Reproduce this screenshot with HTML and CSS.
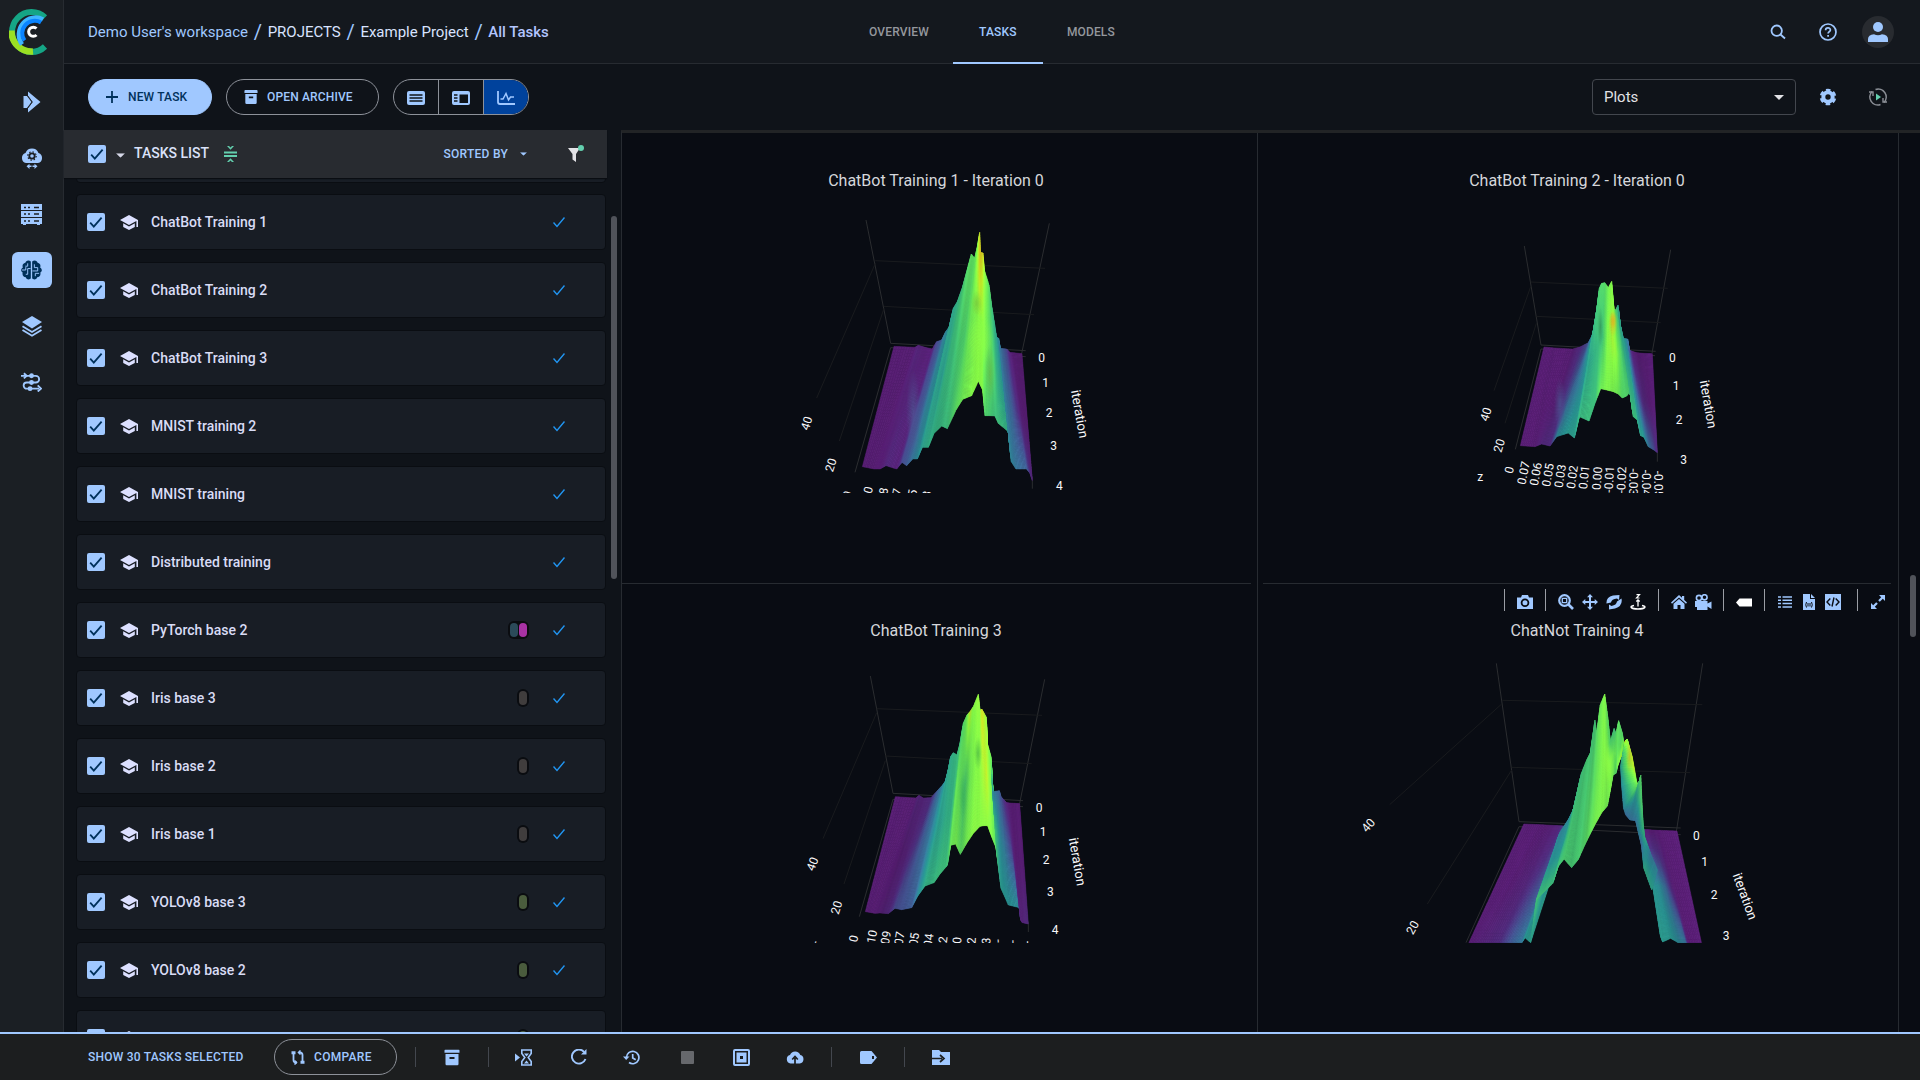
FILE: index.html
```html
<!DOCTYPE html>
<html lang="en">
<head>
<meta charset="utf-8">
<title>Example Project - All Tasks</title>
<link rel="stylesheet" href="styles.css">
</head>
<body>
<svg class="sprite" width="0" height="0">
  <symbol id="check" viewBox="0 0 18 18"><path d="M3.2 9.6l3.6 4L14.6 4.6" fill="none" stroke="currentColor" stroke-width="1.8"/></symbol>
  <symbol id="cap" viewBox="0 0 18 16"><path d="M9 0L0 5l9 5 7.4-4.1V12H18V5zM3.2 8.3v3.6L9 15l5.800-3.100V8.300L9 11.500z" fill="currentColor"/></symbol>
  <symbol id="done" viewBox="0 0 12 12"><path d="M.5 6.500L4 10.500 11.500 1.500" fill="none" stroke="currentColor" stroke-width="1.400"/></symbol>
  <symbol id="caret" viewBox="0 0 10 5"><path d="M0 0h10L5 5z" fill="currentColor"/></symbol>
  <symbol id="archive" viewBox="0 0 16 16"><path fill-rule="evenodd" d="M1.500 0h13q1 0 1 1v2.300H.5V1q0-1 1-1zM1.500 4.500h13V14.500q0 1.500-1.500 1.500H3q-1.500 0-1.500-1.500zM5.500 7.500v2h5v-2z" fill="currentColor"/></symbol>
</svg>
<div class="app">
  <nav class="sidebar">
    <svg class="logo" width="40" height="48" viewBox="0 0 40 48" fill="none">
      <path d="M36 9.500A19.500 20 0 1 0 36 38.500" stroke="#15a585" stroke-width="6"/>
      <path d="M2.500 22.500A20 20.500 0 0 0 24 43.500" stroke="#9be022" stroke-width="6.500"/>
      <path d="M34 11.500A16.500 17 0 0 0 13 36.500" stroke="#3fb5ff" stroke-width="4.500"/>
      <path d="M32 14.500A12.500 12.500 0 0 0 15.500 32.500" stroke="#0a84ff" stroke-width="4"/>
      <path d="M27.500 20.500A4.600 4.600 0 1 0 27.500 27" stroke="#fff" stroke-width="3"/>
    </svg>
    <a class="nav"><svg width="18" height="22" viewBox="0 0 18 22"><path d="M5 .5L17.500 11 5 21.500V17L9.500 11 5 5z" fill="#a0c8ff"/><path d="M.5 5H4L8.500 11 4 17H.5z" fill="#a0c8ff"/><path d="M4.500 4.500L9.300 11l-4.800 6.500" fill="none" stroke="#1b1f24" stroke-width=".9"/></svg></a>
    <a class="nav"><svg width="22" height="22" viewBox="0 0 22 22"><path d="M5 16a5.200 5.200 0 0 1-.5-10A7 7 0 0 1 17.500 6 5.200 5.200 0 0 1 17 16z" fill="#a0c8ff"/><circle cx="11" cy="9" r="2.700" fill="none" stroke="#1b1f24" stroke-width="1.800"/><circle cx="11" cy="9" r="4.200" fill="none" stroke="#1b1f24" stroke-width="1.200" stroke-dasharray="1.400 1.899"/><path d="M5.500 19.300l3-2.600v1.800h5v-1.800l3 2.600-3 2.600v-1.800h-5v1.800z" fill="#a0c8ff"/><path d="M11 17v5" stroke="#1b1f24"/></svg></a>
    <a class="nav"><svg width="21" height="21" viewBox="0 0 21 21"><path d="M0 0h21v6H0zM0 7h21v6H0zM0 14h21v6h-2v1h-3v-1H5v1H2v-1H0z" fill="#a0c8ff"/><path d="M3 3.500h2M7 3.500h2M13 3.500h5M3 10h2M7 10h2M13 10h5M3 17h2M7 17h2M13 17h5" stroke="#1b1f24" stroke-width="1.500"/></svg></a>
    <a class="nav nav-on"><svg width="21" height="20" viewBox="0 0 22 21"><path d="M10.300 1.500C8-.6 4.800.7 4.600 3 1.800 3.500 1 6 2 8-.5 9.500-.3 12 1.700 13c-.7 3 1 5 3.300 5 .7 2.500 3.700 3 5.300 1.500zM11.700 1.500C14-.6 17.200.7 17.400 3c2.800.5 3.600 3 2.600 5 2.500 1.500 2.300 4 .3 5 .7 3-1 5-3.300 5-.7 2.500-3.700 3-5.300 1.500z" fill="#00315b"/><path d="M1 10.500h4v-3M7 3.500v3H4.500M10 9H7v6H5M14 4.500v3.500h3.500M12 11.500h5.500V8M15 17v-3h4" fill="none" stroke="#a0c8ff"/></svg></a>
    <a class="nav"><svg width="20" height="21" viewBox="0 0 20 21"><path d="M10 0l10 6-10 6.500L0 6z" fill="#a0c8ff"/><path d="M.5 10.300l9.500 5.700 9.500-5.700M.5 14l9.500 5.700 9.500-5.700" fill="none" stroke="#a0c8ff" stroke-width="1.900"/></svg></a>
    <a class="nav"><svg width="21" height="20" viewBox="0 0 22 20" fill="none" stroke="#a0c8ff" stroke-width="1.900"><path d="M0 3.500h15.500a3.400 3.400 0 0 1 0 7H6a3.200 3.200 0 0 0 0 6.500h13"/><path d="M3 .8l3 2.700-3 2.700M17.500 13.500L21 17l-3.500 3" /><circle cx="11" cy="3.500" r="1.600" fill="#a0c8ff"/><circle cx="11" cy="10.500" r="1.600" fill="#a0c8ff"/><circle cx="9.500" cy="17" r="1.600" fill="#a0c8ff"/></svg></a>
  </nav>
  <div class="main">
    <header class="header">
      <div class="crumbs"><span>Demo User's workspace</span><i>/</i><span class="crumb-w">PROJECTS</span><i>/</i><span class="crumb-w">Example Project</span><i>/</i><b>All Tasks</b></div>
      <div class="tabs"><a class="tab">OVERVIEW</a><a class="tab tab-on">TASKS</a><a class="tab">MODELS</a></div>
      <div class="user">
        <svg width="16" height="16" viewBox="0 0 16 16" fill="none" stroke="#a0c8ff" stroke-width="1.800"><circle cx="6.700" cy="6.700" r="5.200"/><path d="M10.500 10.500L15 14.500"/></svg>
        <svg width="18" height="18" viewBox="0 0 18 18" fill="none" stroke="#a0c8ff" stroke-width="1.700"><circle cx="9" cy="9" r="8"/><path d="M6.600 7.200c0-3 4.800-3 4.800-.2 0 1.600-2.300 1.800-2.300 3.600M9.100 12v1.800"/></svg>
        <span class="avatar"><svg width="20" height="22" viewBox="0 0 20 22" fill="#a0c8ff"><circle cx="10" cy="6" r="5"/><path d="M0 21v-3q0-4 6-4.800 4 2 8 0 6 .8 6 4.800v3z"/></svg></span>
      </div>
    </header>
    <div class="toolbar">
      <button class="btn btn-new"><svg width="12" height="12" viewBox="0 0 12 12"><path d="M6 0v12M0 6h12" stroke="#00315b" stroke-width="1.800"/></svg>NEW TASK</button>
      <button class="btn btn-archive"><svg width="14" height="14"><use href="#archive"/></svg>OPEN ARCHIVE</button>
      <div class="views">
        <span><svg width="18" height="14" viewBox="0 0 18 14"><rect width="18" height="14" rx="2" fill="#a0c8ff"/><path d="M2.500 4h13M2.500 7h13M2.500 10h13" stroke="#0f1319" stroke-width="1.300"/></svg></span>
        <span><svg width="18" height="14" viewBox="0 0 18 14"><rect width="18" height="14" rx="2" fill="#a0c8ff"/><path d="M7.500 3.500H16V12H7.500z" fill="#0f1319"/><path d="M2 4h3.500M2 7h3.500M2 10h3.500" stroke="#0f1319" stroke-width="1.400"/></svg></span>
        <span class="view-on"><svg width="18" height="14" viewBox="0 0 18 14" fill="none" stroke="#a0c8ff" stroke-width="1.800"><path d="M1 0v11q0 2 2 2h15"/><path d="M3.500 8H6L9 2.500 11.500 9 13.500 6H17" stroke-width="1.500"/></svg></span>
      </div>
      <div class="select">Plots<svg width="10" height="5"><use href="#caret"/></svg></div>
      <svg class="gear" width="18" height="18" viewBox="0 0 18 18"><circle cx="9" cy="9" r="4.700" fill="none" stroke="#a0c8ff" stroke-width="4"/><circle cx="9" cy="9" r="7" fill="none" stroke="#a0c8ff" stroke-width="2.600" stroke-dasharray="4.330 3" stroke-dashoffset="-1.500"/></svg>
      <svg class="auto" width="18" height="18" viewBox="0 0 18 18" fill="none" stroke="#8a8e95" stroke-width="1.600"><path d="M6.500 1.500A8 8 0 0 1 15 14.500M11.500 16.500A8 8 0 0 1 3 3.500"/><path d="M0 4h4v4M18 14h-4v-4" stroke-width="1.400"/><path d="M7 5.500L12 9l-5 3.500z" fill="#63cfae" stroke="none"/></svg>
    </div>
    <div class="split">
      <section class="tasks">
        <div class="tasks-head">
          <span class="box"><svg width="18" height="18"><use href="#check"/></svg></span>
          <svg class="head-caret" width="9" height="5" viewBox="0 0 10 5"><use href="#caret"/></svg>
          <h2>TASKS LIST</h2>
          <svg class="fold" width="13" height="16" viewBox="0 0 13 16" fill="#63cfae"><path d="M0 5.500h13v2H0zM0 9h13v2H0zM3 0h2l1.500 1.500L8 0h2L6.500 3.800zM3 16h2l1.500-1.500L8 16h2l-3.500-3.800z"/></svg>
          <span class="sorted">SORTED BY<svg width="7" height="4" viewBox="0 0 10 5"><use href="#caret"/></svg></span>
          <svg class="filter" width="16" height="18" viewBox="0 0 16 18"><path d="M0 3h12l-4 6v8l-3.500-2.500V9z" fill="#e2e2e6"/><circle cx="13" cy="3" r="3" fill="#63cfae"/></svg>
        </div>
        <div class="list-wrap">
          <div class="list" id="list"></div>
          <div class="thumb"></div>
        </div>
      </section>
      <section class="plots">
        <article class="cell">
          <h3>ChatBot Training 1 - Iteration 0</h3>
          <div class="scene">
            <svg viewBox="-474 99 1887 900">
              <path class="axis" d="M258 180L332 550M808 190L724 585M332 550L737 572M332 563L737 590M332 563L225 937M757 950V986"/>
              <path class="grid" d="M286 302L795 325M312 439L762 464M286 310L110 714M312 445L178 843"/>
              <text transform="translate(80 790) rotate(-72)">40</text><text transform="translate(153 915) rotate(-72)">20</text>
              <text x="785" y="593">0</text><text x="797" y="670">1</text><text x="807" y="758">2</text><text x="821" y="859">3</text><text x="838" y="978">4</text>
              <text class="name" transform="translate(899 762) rotate(80)">iteration</text>
              <text transform="translate(203 1004) rotate(-74)">0</text><text transform="translate(265 990) rotate(-76)">0</text><text transform="translate(311 993) rotate(-78)">8</text><text transform="translate(352 996) rotate(-79)">7</text><text transform="translate(398 999) rotate(-80)">5</text><text transform="translate(441 1003) rotate(-82)">3</text><text transform="translate(481 1008) rotate(-83)">1</text>
            </svg>
            <canvas width="629" height="300" data-surface="first"></canvas>
          </div>
        </article>
        <article class="cell">
          <h3>ChatBot Training 2 - Iteration 0</h3>
          <div class="scene">
            <svg viewBox="-531 -81 1884 900">
              <path class="axis" d="M253 78L303 375M692 89L636 400M303 375L647 394M303 387L645 407M303 387L226 688M652 696V725"/>
              <path class="grid" d="M272 186L683 205M289 289L662 308M272 200L162 512M289 310L195 610"/>
              <text transform="translate(138 583) rotate(-72)">40</text><text transform="translate(178 677) rotate(-74)">20</text>
              <text x="697" y="413">0</text><text x="708" y="499">1</text><text x="717" y="601">2</text><text x="731" y="720">3</text>
              <text class="name" transform="translate(805 553) rotate(80)">iteration</text>
              <text x="121" y="771">z</text><text transform="translate(208 750) rotate(-76)">0</text>
              <text transform="translate(251 759) rotate(-78)">0.07</text><text transform="translate(288 762) rotate(-79)">0.06</text><text transform="translate(324 765) rotate(-80)">0.05</text><text transform="translate(361 768) rotate(-81)">0.03</text><text transform="translate(397 771) rotate(-82)">0.02</text><text transform="translate(433 772) rotate(-84)">0.01</text><text transform="translate(472 775) rotate(-86)">0.00</text><text transform="translate(508 778) rotate(-87)">-0.01</text><text transform="translate(545 780) rotate(-88)">-0.02</text><text transform="translate(580 786) rotate(91)">-0.03</text><text transform="translate(617 789) rotate(90)">-0.04</text><text transform="translate(655 792) rotate(89)">-0.05</text>
            </svg>
            <canvas width="628" height="300" data-surface="second"></canvas>
          </div>
        </article>
        <article class="cell">
          <h3>ChatBot Training 3</h3>
          <div class="scene">
            <svg viewBox="-474 99 1887 900">
              <path class="axis" d="M271 198L339 550M794 208L718 585M339 550L729 572M339 568L729 590M339 568L238 920M745 935V966"/>
              <path class="grid" d="M290 296L786 316M316 438L755 461M290 308L129 686M316 452L192 822"/>
              <text transform="translate(98 762) rotate(-68)">40</text><text transform="translate(170 893) rotate(-73)">20</text>
              <text x="777" y="593">0</text><text x="789" y="665">1</text><text x="798" y="750">2</text><text x="811" y="847">3</text><text x="825" y="959">4</text>
              <text class="name" transform="translate(892 755) rotate(80)">iteration</text>
              <text transform="translate(105 998) rotate(-74)">-</text><text transform="translate(221 986) rotate(-78)">0</text>
              <text transform="translate(276 980) rotate(-79)">10</text><text transform="translate(318 983) rotate(-80)">09</text><text transform="translate(359 985) rotate(-81)">07</text><text transform="translate(403 988) rotate(-82)">05</text><text transform="translate(446 991) rotate(-83)">04</text><text transform="translate(489 989) rotate(-84)">2</text><text transform="translate(532 991) rotate(-86)">0</text><text transform="translate(575 992) rotate(-87)">2</text><text transform="translate(619 993) rotate(-88)">3</text><text transform="translate(656 993) rotate(88)">-</text><text transform="translate(700 995) rotate(89)">-</text><text transform="translate(743 998) rotate(90)">-</text>
            </svg>
            <canvas width="629" height="300" data-surface="third"></canvas>
          </div>
        </article>
        <article class="cell">
          <div class="modebar">
            <span><svg width="16" height="14" viewBox="0 0 16 14"><path d="M5 0h6l1 2.500h4V14H0V2.500h4z" fill="#a0c8ff"/><circle cx="8" cy="7.800" r="3.400" fill="none" stroke="#090c13" stroke-width="1.800"/></svg></span>
            <span>
              <svg width="16" height="16" viewBox="0 0 16 16" fill="none" stroke="#a0c8ff"><circle cx="6.500" cy="6.500" r="5.300" stroke-width="2.200"/><path d="M10.500 10.500l4.500 4.500" stroke-width="2.600"/><path d="M4.300 4.300h4.400v4.400H4.300z" stroke-width="1.300"/></svg>
              <svg width="16" height="16" viewBox="0 0 16 16"><path d="M8 0l3 3.300H9V7h3.700V5L16 8l-3.300 3V9H9v3.700h2L8 16l-3-3.300h2V9H3.300v2L0 8l3.300-3v2H7V3.300H5z" fill="#a0c8ff"/></svg>
              <svg width="16" height="16" viewBox="0 0 16 16" fill="#a0c8ff"><path d="M.5 9.500Q0 3 7 1.500L13.500 1 13 6 11 4.500Q5.500 5 5 8.500zM15.500 4.500Q17 12 9 14.500L3 15.500 3 10.500 5.500 12Q10.500 11 11 7.500z"/></svg>
              <svg width="16" height="16" viewBox="0 0 16 16" fill="none" stroke="#fff"><path d="M6.500.7h3L6.500 4h3" stroke-width="1.200"/><path d="M8 6v6.500M6.300 7.500L8 5.800l1.700 1.700" stroke-width="1.300"/><path d="M4 11.500C-1 12.500 1 15 8 15s9-2.500 4-3.500" stroke-width="1.700"/></svg>
            </span>
            <span>
              <svg width="16" height="14" viewBox="0 0 16 14" fill="#a0c8ff"><path d="M8 0l3 2.800V1h2.200v4L16 7.500 15 8.800 8 2.500 1 8.800 0 7.500zM2.500 8.700L8 4l5.500 4.700V14h-4v-4h-3v4h-4z"/></svg>
              <svg width="17" height="16" viewBox="0 0 17 16" fill="#a0c8ff"><path d="M0 7h12.500v2.500l4-2v7.500l-4-2.500V16H2v-3H0z"/><circle cx="4" cy="4" r="2.600" fill="none" stroke="#a0c8ff" stroke-width="1.600"/><circle cx="9.500" cy="3.300" r="2.600" fill="none" stroke="#a0c8ff" stroke-width="1.600"/></svg>
            </span>
            <span><svg width="16" height="9" viewBox="0 0 16 9"><path d="M3.500.5H16v8H3.500L0 4.500z" fill="#fff"/></svg></span>
            <span class="wide">
              <svg width="14" height="12" viewBox="0 0 14 12"><path d="M0 1h3M4.500 1H14M0 4.300h3M4.500 4.300H14M0 7.600h3M4.500 7.600H14M0 11h3M4.500 11H14" stroke="#a0c8ff" stroke-width="1.500"/></svg>
              <svg width="12" height="16" viewBox="0 0 12 16"><path d="M0 0h7v5h5v11H0zM8 0l4 4H8z" fill="#a0c8ff"/><path d="M3.500 8Q2 10.800 3.500 13.500M8.500 8q1.500 2.800 0 5.500M5 9v3.500M7 9v3.500" fill="none" stroke="#090c13"/></svg>
              <svg width="16" height="16" viewBox="0 0 16 16"><path d="M0 0h16v16H0z" fill="#a0c8ff"/><path d="M5.300 4.500L2 8l3.300 3.500M10.700 4.500L14 8l-3.300 3.500M9 3.500l-2 9" fill="none" stroke="#090c13" stroke-width="1.400"/></svg>
            </span>
            <span><svg width="14" height="14" viewBox="0 0 14 14"><path d="M8 0h6v6l-2.200-2.200L8.800 6.800 7.200 5.200l3-3zM0 8l2.200 2.200L5.200 7.200l1.600 1.600-3 3L6 14H0z" fill="#a0c8ff"/></svg></span>
          </div>
          <h3>ChatNot Training 4</h3>
          <div class="scene">
            <svg viewBox="-201 219 1884 900">
              <path class="axis" d="M499 280L567 755M1118 280L1039 785M567 755L1052 774M567 770L1052 794M567 770L408 1118"/>
              <path class="grid" d="M517 391L1117 404M545 592L1081 608M515 402L179 704M545 600L292 1002"/>
              <text transform="translate(115 766) rotate(-50)">40</text><text transform="translate(248 1073) rotate(-62)">20</text>
              <text x="1099" y="799">0</text><text x="1124" y="877">1</text><text x="1152" y="975">2</text><text x="1188" y="1098">3</text>
              <text class="name" transform="translate(1245 979) rotate(70)">iteration</text>
            </svg>
            <canvas width="628" height="300" data-surface="fourth"></canvas>
          </div>
        </article>
        <div class="page-thumb"></div>
      </section>
    </div>
  </div>
  <footer class="footer">
    <span class="selected">SHOW 30 TASKS SELECTED</span>
    <button class="btn btn-compare"><svg width="14" height="15" viewBox="0 0 14 15" fill="none" stroke="#a0c8ff" stroke-width="1.800"><path d="M2.500 2v8q0 2.500 2.500 2.500h1M11.500 13V5Q11.500 2.500 9 2.500H8"/><path d="M3.500 10.500L5.500 12.500l-2 2M9.500.5l-2 2 2 2" stroke-width="1.500"/><path d="M.5 1.200h4v3h-4zM9.500 10.800h4v3h-4z" fill="#a0c8ff" stroke="none"/></svg>COMPARE</button>
    <div class="acts">
      <span><svg width="16" height="17" viewBox="0 0 16 16"><use href="#archive"/></svg></span>
      <span>
        <svg class="enqueue" width="17" height="17" viewBox="0 0 17 17"><path d="M0 4.500L5 8.500 0 12.500z" fill="#a0c8ff"/><path d="M6.800 1h9.400v3.500l-3 4 3 4V16H6.800v-3.500l3-4-3-4z" fill="none" stroke="#a0c8ff" stroke-width="1.600"/><path d="M9 4.500h5l-2.500 3zM9 14.500l2.500-3 2.500 3z" fill="#a0c8ff"/></svg>
        <svg width="16" height="16" viewBox="0 0 16 16"><path d="M13 2.800A7 7 0 1 0 14.500 10" fill="none" stroke="#a0c8ff" stroke-width="1.900"/><path d="M15.500 0v5.500H10z" fill="#a0c8ff"/></svg>
        <svg class="history" width="17" height="15" viewBox="0 0 17 15"><path d="M3.500 7.500A6.200 6.200 0 1 1 6 12.500M9.700 4v4l3 1.800" fill="none" stroke="#a0c8ff" stroke-width="1.700"/><path d="M0 6.500h6.500L3.200 10z" fill="#a0c8ff"/></svg>
        <svg width="13" height="13" viewBox="0 0 13 13"><rect width="13" height="13" rx="1" fill="#66686c"/></svg>
        <svg width="17" height="17" viewBox="0 0 17 17"><rect x="1" y="1" width="15" height="15" rx="1" fill="none" stroke="#a0c8ff" stroke-width="2"/><path fill-rule="evenodd" d="M3.500 3.500h10v10h-10zM7 7v3h3V7z" fill="#a0c8ff"/></svg>
        <svg width="18" height="14" viewBox="0 0 18 14"><path d="M4.500 13.500a4.300 4.300 0 0 1-.5-8.400 5.500 5.500 0 0 1 10.300 0 4.300 4.300 0 0 1-.5 8.400z" fill="#a0c8ff"/><path d="M9 14V8M6.200 9.500L9 6.500l2.800 3" fill="none" stroke="#1c1e1f" stroke-width="1.700"/></svg>
      </span>
      <span><svg width="17" height="13" viewBox="0 0 17 13"><path fill-rule="evenodd" d="M1.500 0H11.500L17 6.500 11.500 13h-10Q0 13 0 11.500v-10Q0 0 1.500 0zM12 5v3h2V5z" fill="#a0c8ff"/></svg></span>
      <span><svg width="18" height="15" viewBox="0 0 18 15"><path d="M0 0h7l2 2h9v13H0z" fill="#a0c8ff"/><path d="M0 8.500h10M8 5l4 3.500L8 12" fill="none" stroke="#1c1e1f" stroke-width="1.700"/></svg></span>
    </div>
  </footer>
</div>
<script src="app.js"></script>
</body>
</html>
```
FILE: styles.css
```css
* { box-sizing: border-box; }
body { margin: 0; background: #090c13; color: #d7d9e8; font-family: Roboto, "Liberation Sans", sans-serif; overflow: hidden; }
svg { display: block; flex: none; }
.sprite { position: absolute; }
.app { height: 1080px; display: grid; grid-template: 1032px 48px / 64px 1fr; }

.sidebar { background: #1b1f24; border-right: 1px solid #272b31; display: flex; flex-direction: column; align-items: flex-start; gap: 20px; padding: 8px 0 0 12px; }
.logo { margin: 0 0 8px -3px; }
.nav { width: 40px; height: 36px; display: grid; place-items: center; border-radius: 6px; padding-right: 1px; }
.nav-on { background: #a0c8ff; }

.main { display: grid; grid-template-rows: 64px 66px 902px; min-width: 0; }
.header { background: #14181e; border-bottom: 1px solid #272b31; display: grid; grid-template-columns: 1fr auto 1fr; padding-left: 24px; }
.crumbs { display: flex; align-items: center; font-size: 15px; color: #a0c8ff; white-space: nowrap; }
.crumbs i { font-style: normal; font-size: 20px; margin: 0 5.7px; }
.crumbs b { font-weight: 500; color: #b3c5ff; }
.crumb-w { color: #d9e3ff; }
.tabs { display: flex; margin-left: -24px; }
.tab { min-width: 90px; padding: 0 24px; text-align: center; line-height: 64px; font-size: 12px; font-weight: 500; letter-spacing: .15px; color: #94979d; height: 64px; border-bottom: 2px solid transparent; }
.tab-on { color: #a0c8ff; border-color: #a0c8ff; }
.user { display: flex; justify-content: flex-end; align-items: center; padding-right: 26px; }
.user svg { margin-right: 33px; }
.user svg + svg { margin-right: 25px; }
.user .avatar svg { margin: 0; }
.avatar { width: 32px; height: 32px; border-radius: 50%; background: #282b30; display: grid; place-items: center; }

.toolbar { background: #0f1319; display: flex; align-items: center; padding: 0 33px 0 24px; }
.btn { height: 36px; border-radius: 18px; font: 500 12px Roboto, "Liberation Sans", sans-serif; letter-spacing: .15px; color: #a0c8ff; background: none; border: 1px solid #8d9199; display: flex; align-items: center; padding: 0; }
.btn-new { width: 124px; background: #a0c8ff; border-color: #a0c8ff; color: #00315b; padding-left: 17px; gap: 10px; margin-right: 14px; }
.btn-archive { width: 153px; padding-left: 17px; gap: 9px; margin-right: 14px; }
.views { width: 136px; height: 36px; border: 1px solid #8d9199; border-radius: 18px; display: grid; grid-template-columns: 44px 45px 1fr; overflow: hidden; }
.views span { display: grid; place-items: center; padding-top: 2px; }
.views span + span { border-left: 1px solid #8d9199; }
.views .view-on { background: #00429c; padding-right: 1px; }
.select { margin-left: auto; width: 204px; height: 36px; border: 1px solid #43474e; border-radius: 4px; display: flex; align-items: center; justify-content: space-between; padding: 0 11px; font-size: 15px; color: #e2e2e6; }
.gear { margin: 0 32px 0 23px; }

.split { display: grid; grid-template-columns: 557px 1fr; min-width: 0; }
.tasks { background: #0f1319; display: grid; grid-template-rows: 48px 854px; }
.tasks-head { width: 543px; background: #282b30; display: flex; align-items: center; padding: 0 23px 0 24px; box-shadow: 0 1px 1px #0a0d12; z-index: 1; }
.box { width: 18px; height: 18px; border-radius: 2px; background: #a0c8ff; color: #00315b; flex: none; }
.head-caret { margin: 2px 9px 0 10px; }
.tasks-head h2 { margin: 0 0 2px; font-size: 14px; font-weight: 500; color: #dbe2f9; }
.fold { margin-left: 15px; }
.sorted { margin-left: auto; display: flex; align-items: center; gap: 12px; font-size: 12px; font-weight: 500; letter-spacing: .25px; color: #a0c8ff; }
.filter { margin-left: 41px; }
.list-wrap { display: flex; height: 854px; }
.list { width: 543px; height: 854px; overflow: hidden; padding-left: 12px; }
.row { width: 530px; height: 56px; margin-bottom: 12px; border: 1px solid #0a0d12; border-radius: 4px; background: #181d25; display: flex; align-items: center; padding-left: 10px; padding-right: 40px; font-size: 14px; font-weight: 500; color: #d9dcf5; }
.row:first-child { margin-top: -51px; margin-bottom: 11px; }
.cap { margin: 2px 13px 0 15px; color: #dce0ff; }
.tags { margin-left: auto; margin-right: 24px; display: flex; gap: 1px; background: #0a0c10; border-radius: 6px; padding: 2px; }
.tags:empty { padding: 0; }
.tags span { width: 8px; height: 14px; border-radius: 4px; }
.status { color: #2196f3; }
.thumb { width: 6px; height: 363px; margin: 38px 0 0 4px; border-radius: 3px; background: #50535a; }

.plots { position: relative; border-left: 1px solid #272b31; border-top: 3px solid #222426; display: grid; grid-template: 450px 449px / 636px 641px; padding-right: 20px; }
.cell { position: relative; border-right: 1px solid #272b31; padding-right: 6px; }
.cell:nth-child(odd) h3 { padding-right: 1px; }
.cell:nth-child(even) { padding-left: 5px; padding-right: 7px; }
.cell h3 { margin: 0; padding-top: 38px; height: 60px; text-align: center; line-height: 20px; font-size: 16px; font-weight: 400; color: #d5d7db; }
.scene { position: relative; height: 300px; overflow: hidden; }
.scene svg { width: 100%; height: 300px; }
.cell:nth-child(-n+2) .scene { height: 391px; border-bottom: 1px solid #272b31; }
.scene canvas { position: absolute; left: 0; top: 0; }
.axis { fill: none; stroke: #2b2d30; stroke-width: 3; }
.grid { fill: none; stroke: #191b1e; stroke-width: 3; }
.scene text { font-size: 36px; fill: #f8f8fa; text-anchor: middle; dominant-baseline: central; }
.scene .name { font-size: 40px; }
.modebar { position: absolute; top: 6px; left: 246px; display: flex; height: 22px; }
.modebar span { display: grid; grid-auto-flow: column; grid-auto-columns: 24px; place-items: center; padding: 4px 8px 0; border-left: 1px solid #9a9da4; }
.modebar .wide { padding-right: 12px; }
.page-thumb { position: absolute; right: 4px; top: 442px; width: 6px; height: 62px; border-radius: 3px; background: #50535a; }

.footer { grid-column: 1 / 3; background: #1c1e1f; border-top: 2px solid #a0c8ff; display: flex; align-items: center; padding-left: 88px; color: #a0c8ff; }
.selected { width: 186px; font-size: 12px; font-weight: 500; letter-spacing: .22px; white-space: nowrap; }
.btn-compare { width: 123px; padding-left: 16px; gap: 9px; letter-spacing: .3px; }
.acts { display: flex; margin-left: 18px; height: 20px; }
.acts span { border-left: 1px solid #43474e; padding: 0 9px; display: grid; grid-auto-flow: column; grid-auto-columns: 54px; place-items: center; }
.acts .enqueue, .acts .history { margin-right: 3px; }
```
FILE: app.js
```js
// Task list: name and tag colours
const tasks = [
  ["", []], ["ChatBot Training 1", []], ["ChatBot Training 2", []], ["ChatBot Training 3", []],
  ["MNIST training 2", []], ["MNIST training", []], ["Distributed training", []],
  ["PyTorch base 2", ["#2b4a59", "#a832a4"]],
  ["Iris base 3", ["#403d3d"]], ["Iris base 2", ["#403d3d"]], ["Iris base 1", ["#403d3d"]],
  ["YOLOv8 base 3", ["#4a5c3d"]], ["YOLOv8 base 2", ["#4a5c3d"]], ["YOLOv8 base 1", ["#4a5c3d"]],
];
document.getElementById("list").innerHTML = tasks.map(([name, tags]) => `
  <div class="row">
    <span class="box"><svg width="18" height="18"><use href="#check"/></svg></span>
    <svg class="cap" width="18" height="16"><use href="#cap"/></svg>${name}
    <div class="tags">${tags.map(c => `<span style="background:${c}"></span>`).join("")}</div>
    <svg class="status" width="12" height="12"><use href="#done"/></svg>
  </div>`).join("");

// Colour scale, value to RGB
const scale = [
  [0, 90, 32, 118], [0.12, 82, 48, 130], [0.25, 70, 88, 150], [0.35, 58, 118, 156], [0.45, 42, 146, 146],
  [0.55, 52, 170, 128], [0.65, 72, 198, 112], [0.78, 100, 226, 92], [0.9, 140, 255, 72], [1, 196, 236, 44], [1.1, 214, 190, 34],
];
function colour(v, shade) {
  v = Math.max(0, Math.min(1.1, v));
  let i = 1;
  while (scale[i][0] < v) i++;
  const a = scale[i - 1], b = scale[i], f = (v - a[0]) / (b[0] - a[0]);
  return "rgb(" + [1, 2, 3].map(k => Math.round((a[k] + (b[k] - a[k]) * f) * shade)).join() + ")";
}

// Each rib: back x, y, value, front x, y, value, optional middle value
const surfaces = {
  first: { origin: [-474, 99], sx: 1, patches: [[
    [342,559,0,247,920,0],[405,562,0,283,927,0],[415,556,.06,300,927,0],[435,562,.02,318,917,.08],[457,567,.02,350,927,.02,.05],
    [470,545,.2,366,907,.22],[485,540,.3,380,917,.28],[497,515,.4,398,897,.36,.4],[512,495,.45,412,897,.42],[520,445,.5,427,862,.5],
    [532,425,.55,445,862,.55,.48],[548,380,.6,462,820,.55],[560,335,.68,485,798,.58,.6],[574,282,.75,502,806,.6,.66],[584,295,.75,528,750,.75,.68],
    [592,260,.8,548,718,.82,.8],[599,217,1.02,575,707,.88,.85],[601,277,1.1,595,663,.9,.9],[609,279,1.05,608,690,.88,.9],[613,330,.92,615,767,.68,.86],
    [627,375,.75,630,767,.64,.74],[634,430,.62,645,768,.6,.7],[650,532,.5,655,790,.6,.55],[656,535,.42,685,815,.55,.45],[661,565,.35,694,905,.4],
    [680,567,.2,708,927,.36,.3],[690,578,.04,740,927,.3,.1],[700,578,0,750,940,.15,0],[726,581,0,757,962,.05,0]]],
    glints: [[600,540,40,80,"140,255,72"],[590,430,16,40,"120,200,60"],[630,640,14,90,"100,190,76"],[400,760,22,130,"78,84,148"]] },
  second: { origin: [-531, -81], sx: 1, patches: [[
    [312,381,0,241,677,0],[345,384,0,285,680,0],[398,387,0,305,672,.08,0],[420,381,.1,330,678,.1,.16],[445,368,.25,350,650,.42,.32],
    [457,345,.45,385,639,.48,.4],[465,310,.55,403,654,.5,.45],[472,260,.6,418,590,.58,.5],[478,205,.66,447,603,.6,.55],[485,190,.7,465,550,.6,.58],
    [494,188,.7,482,506,.82,.62],[505,203,.82,500,510,.86,.88],[515,184,.88,520,515,.84,.95],[522,268,.9,535,522,.8,.92],[527,270,.7,547,534,.7,.8],
    [534,255,.52,560,528,.7,.62],[540,310,.52,570,515,.66,.58],[550,355,.5,580,590,.6,.55],[563,357,.35,592,600,.58,.48],[568,390,.3,602,647,.5,.42],
    [577,394,.04,612,652,.48,.25],[590,398,0,625,680,.38,.1],[610,400,0,645,692,.2,0],[637,401,0,652,698,.08,0]]],
    glints: [[519,310,14,42,"222,190,34"],[519,300,10,26,"222,180,34"],[481,320,9,60,"50,150,90"],[360,555,18,80,"78,84,148"]] },
  third: { origin: [-474, 99], sx: 1, patches: [[
    [346,560,0,256,905,0],[408,564,0,285,910,0],[417,556,.07,300,909,.02,0],[430,564,.05,325,911,.08,.04],[453,563,.1,345,895,.22],
    [474,540,.3,365,899,.24,.28],[488,525,.4,395,893,.28,.36],[497,512,.45,412,860,.42,.42],[507,470,.5,435,828,.55,.48],[512,440,.52,462,818,.58,.5],
    [520,428,.55,480,792,.6,.54],[531,435,.58,497,772,.6,.55],[540,400,.6,502,765,.62,.62],[550,340,.68,512,706,.8,.8],[561,315,.8,527,702,.84,.76],
    [570,305,1,541,733,.74,.66],[580,290,.88,560,700,.84,.82],[595,253,.92,580,670,.9,.88],[600,300,.9,600,649,.9,.9],[606,298,1.05,612,647,.9,.95],
    [619,322,.92,623,647,.9,1],[622,400,.95,635,680,.86,.92],[633,440,.8,648,713,.76,.8],[638,545,.4,654,760,.58,.6],[658,542,.3,663,835,.48,.42],
    [663,560,.24,685,885,.45,.38],[680,578,.04,718,893,.43,.18],[690,579,0,722,930,.05,0],[705,580,0,727,938,.05,0],[719,581,0,745,942,.1,0]]],
    glints: [[594,430,12,50,"80,190,70"],[549,560,12,70,"60,180,90"]] },
  fourth: { origin: [-201, 219], sx: 1.129, patches: [
    [[515,762,0,369,1118,0],[560,764,0,400,1118,.04,0],[590,766,.02,445,1118,.1],[610,767,.06,480,1118,.28,.18],[622,768,.2,510,1118,.38,.28],[632,760,.4,518,1103,.46,.42],[640,745,.4,533,1118,.5,.5]],
    [[834,778,.1,878,1098,.48,.46],[838,779,0,884,1116,.48,.46],[846,779,0,905,1105,.47,.42],[858,780,0,925,1118,.42,.32],[870,781,0,946,1118,.36,.05],[878,781,0,952,1118,0,0],[922,783,0,987,1118,0]],
    [[785,512,1,790,508,.9],[777,545,.6,803,560,1],[772,590,.48,808,590,1,.8],[775,650,.42,815,635,.86,.62],[780,715,.4,819,645,.8,.58],[786,735,.33,822,640,.75,.5],[797,750,.35,826,615,.72,.45],[812,752,.35,829,700,.68,.45],[820,790,.36,832,760,.6],[828,828,.3,836,800,.55],[834,895,.55,852,850,.35],[855,960,.5,870,900,.4]],
    [[603,810,.38,533,1118,.5],[612,785,.4,548,990,.62,.45],[635,745,.42,592,940,.6,.45],[648,715,.5,606,890,.62,.5],[668,610,.6,622,867,.66],[682,570,.64,642,893,.64],[692,548,.64,660,868,.66],[704,450,.62,675,830,.7,.68],[709,490,.7,690,795,.78,.72],[718,405,.8,705,762,.84,.8],[730,372,.88,722,728,.86,.88],[738,440,.76,737,708,.82,.9],[745,515,.68,745,660,.86,.88],[755,475,.6,752,615,.82,.8],[760,492,.7,760,610,.7,.8],[767,452,.75,764,590,.85,.75],[777,490,.7,770,570,.9,.76],[780,518,.85,773,560,.95]]],
    glints: [[742,580,14,60,"140,255,72"],[796,560,10,50,"190,190,40"]] },
};

let seed = 7;
const random = () => (seed = (seed * 16807) % 2147483647) / 2147483647;

function drawPatch(ctx, ribs) {
  const across = 8, along = 40;
  const fine = [];
  for (let i = 0; i < ribs.length - 1; i++) {
    for (let s = 0; s < across; s++) fine.push(blend(ribs[i], ribs[i + 1], s / across));
  }
  fine.push(blend(ribs[ribs.length - 1], ribs[ribs.length - 1], 0));
  let shade = 1;
  for (let i = 0; i < fine.length - 1; i++) {
    const a = fine[i], b = fine[i + 1];
    shade += (random() - 0.5) * 0.04;
    shade = 1 + (shade - 1) * 0.93;
    for (let j = 0; j < along; j++) {
      const f = j / along, g = (j + 1) / along;
      const v = f < 0.5 ? a[2] + (a[6] - a[2]) * f * 2 : a[6] + (a[5] - a[6]) * (f * 2 - 1);
      ctx.fillStyle = ctx.strokeStyle = colour(v, shade);
      ctx.beginPath();
      ctx.moveTo(mix(a[0], a[3], f), mix(a[1], a[4], f));
      ctx.lineTo(mix(b[0], b[3], f), mix(b[1], b[4], f));
      ctx.lineTo(mix(b[0], b[3], g), mix(b[1], b[4], g));
      ctx.lineTo(mix(a[0], a[3], g), mix(a[1], a[4], g));
      ctx.closePath();
      ctx.fill();
      ctx.stroke();
    }
  }
}
function mix(a, b, f) { return a + (b - a) * f; }
function blend(a, b, f) {
  const am = a[6] ?? (a[2] + a[5]) / 2, bm = b[6] ?? (b[2] + b[5]) / 2;
  return [0, 1, 2, 3, 4, 5].map(k => mix(a[k], b[k], f)).concat(mix(am, bm, f));
}

document.querySelectorAll("canvas").forEach(canvas => {
  const surface = surfaces[canvas.dataset.surface];
  const ctx = canvas.getContext("2d");
  ctx.scale(1 / 3, 1 / 3);
  ctx.translate(-surface.origin[0], -surface.origin[1]);
  ctx.scale(surface.sx, 1);
  ctx.lineWidth = 1.5;
  surface.patches.forEach(p => drawPatch(ctx, p));
  ctx.globalCompositeOperation = "source-atop";
  surface.glints.forEach(([x, y, rx, ry, rgb]) => {
    ctx.save();
    ctx.translate(x, y);
    ctx.scale(rx, ry);
    const g = ctx.createRadialGradient(0, 0, 0, 0, 0, 1);
    g.addColorStop(0, `rgba(${rgb},.8)`);
    g.addColorStop(1, `rgba(${rgb},0)`);
    ctx.fillStyle = g;
    ctx.fillRect(-1, -1, 2, 2);
    ctx.restore();
  });
});
```
